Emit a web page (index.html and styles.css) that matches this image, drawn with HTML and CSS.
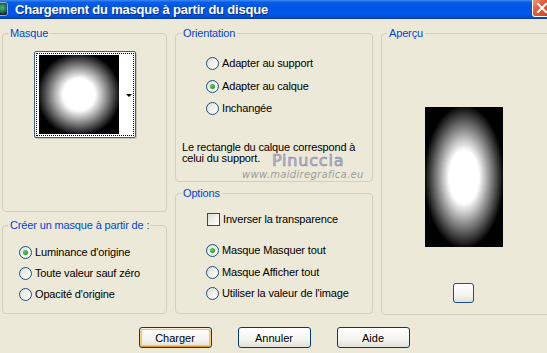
FILE: index.html
```html
<!DOCTYPE html>
<html lang="fr">
<head>
    <meta charset="UTF-8">
    <title>Chargement du masque à partir du disque</title>
    <link rel="stylesheet" href="styles.css">
</head>
<body>

    <div class="titlebar">
        <span class="app-icon"></span>
        <span class="title">Chargement du masque à partir du disque</span>
        <span class="close-btn">
            <svg width="12" height="12" viewBox="0 0 12 12">
                <path d="M2 2 L10 10 M10 2 L2 10" stroke="#fff" stroke-width="2" stroke-linecap="square"/>
            </svg>
        </span>
    </div>

    <div class="content">
        <div class="column">
            <div class="group masque">
                <span class="legend">Masque</span>
                <div class="thumb-box">
                    <div class="thumb-inner">
                        <div class="thumb-image"></div>
                        <div class="thumb-strip"><span class="arrow"></span></div>
                    </div>
                </div>
            </div>

            <div class="group creer">
                <span class="legend">Créer un masque à partir de :</span>
                <div class="options-list">
                    <div class="option"><span class="radio checked"></span>Luminance d'origine</div>
                    <div class="option"><span class="radio"></span>Toute valeur sauf zéro</div>
                    <div class="option"><span class="radio"></span>Opacité d'origine</div>
                </div>
            </div>
        </div>

        <div class="column">
            <div class="group orientation">
                <span class="legend">Orientation</span>
                <div class="options-list">
                    <div class="option"><span class="radio"></span>Adapter au support</div>
                    <div class="option"><span class="radio checked"></span>Adapter au calque</div>
                    <div class="option"><span class="radio"></span>Inchangée</div>
                </div>
                <p class="note">Le rectangle du calque correspond à<br>celui du support.</p>
                <span class="watermark-name">Pinuccia</span>
                <span class="watermark-url">www.maidiregrafica.eu</span>
            </div>

            <div class="group options">
                <span class="legend">Options</span>
                <div class="option check-row"><span class="checkbox"></span>Inverser la transparence</div>
                <div class="options-list">
                    <div class="option"><span class="radio checked"></span>Masque Masquer tout</div>
                    <div class="option"><span class="radio"></span>Masque Afficher tout</div>
                    <div class="option"><span class="radio"></span>Utiliser la valeur de l'image</div>
                </div>
            </div>
        </div>

        <div class="column">
            <div class="group apercu">
                <span class="legend">Aperçu</span>
                <div class="preview"></div>
                <div class="small-btn"></div>
            </div>
        </div>
    </div>

    <div class="buttons">
        <button class="btn default">Charger</button>
        <button class="btn">Annuler</button>
        <button class="btn">Aide</button>
    </div>

</body>
</html>
```

FILE: styles.css
```css
html, body {
    margin: 0;
    padding: 0;
}

body {
    width: 547px;
    height: 353px;
    overflow: hidden;
    background-color: #ECE9D8; /* XP dialog beige */
    font-family: 'Liberation Sans', Arial, sans-serif;
    font-size: 11px;
    letter-spacing: -0.15px;
    color: #000;
}

/* Title bar */
.titlebar {
    position: relative;
    height: 19px;
    display: flex;
    align-items: center;
    background: linear-gradient(#3B8CF5 0, #0A5EE6 12%, #0054E3 40%, #0058EE 75%, #0847C8 100%);
    border-bottom: 1px solid #0A3FAE;
    box-sizing: border-box;
}

.app-icon {
    position: absolute;
    left: -6px;
    top: 2px;
    width: 14px;
    height: 14px;
    border-radius: 3px;
    background: radial-gradient(circle at 60% 40%, #3ec46b 0, #2a6b5a 40%, #1a1a2a 70%);
    border: 1px solid #9ab;
    box-sizing: border-box;
}

.title {
    margin-left: 15px;
    color: #FFFFFF;
    font-weight: bold;
    font-size: 13px;
    letter-spacing: -0.2px;
    text-shadow: 1px 1px 0 #0A2B8A;
}

.close-btn {
    position: absolute;
    left: 532px;
    top: 0;
    width: 21px;
    height: 17px;
    border: 1px solid #fff;
    border-top: none;
    border-radius: 0 0 0 3px;
    background: linear-gradient(135deg, #F19C7E 0, #E35D3A 35%, #C8401F 100%);
    box-sizing: border-box;
    display: flex;
    align-items: center;
    padding-left: 3px;
}

/* Main layout */
.content {
    display: grid;
    grid-template-columns: 165px 198px 170px;
    column-gap: 8px;
    padding: 14px 0 0 2px;
}

.column {
    display: flex;
    flex-direction: column;
}

.group {
    position: relative;
    border: 1px solid #D0D0BF;
    border-radius: 4px;
    box-sizing: border-box;
}

.legend {
    position: absolute;
    left: 5px;
    top: -7px;
    padding: 0 2px;
    line-height: 13px;
    color: #0046D5;
    background-color: #ECE9D8;
    white-space: nowrap;
}

.masque {
    height: 179px;
}

.creer {
    height: 89px;
    margin-top: 13px;
}

.orientation {
    height: 149px;
}

.options {
    height: 121px;
    margin-top: 11px;
}

.apercu {
    height: 282px;
}

/* Mask thumbnail */
.thumb-box {
    width: 102px;
    height: 87px;
    margin: 17px 0 0 31px;
    border: 1px solid #3F5F7F;
    border-radius: 2px;
    background-color: #FFFFFF;
    box-sizing: border-box;
    padding: 1px;
    box-shadow: 1px 1px 0 #C9C6B5;
}

.thumb-inner {
    height: 100%;
    border: 1px dotted #000;
    box-sizing: border-box;
    display: flex;
    padding: 1px 0 0 2px;
}

.thumb-image {
    width: 80px;
    height: 79px;
    background: radial-gradient(circle at 50% 50%, #FFFFFF 0, #FFFFFF 16px, #000000 42px);
}

.thumb-strip {
    flex: 1;
    display: flex;
    align-items: center;
    justify-content: flex-end;
    padding-right: 1px;
}

.arrow {
    width: 0;
    height: 0;
    border-left: 3px solid transparent;
    border-right: 3px solid transparent;
    border-top: 3px solid #000;
    margin-top: 1px;
}

/* Radios and checkboxes */
.options-list {
    display: flex;
    flex-direction: column;
}

.option {
    display: flex;
    align-items: center;
    height: 13px;
    line-height: 13px;
    white-space: nowrap;
}

.radio,
.checkbox {
    width: 13px;
    height: 13px;
    flex-shrink: 0;
    margin-right: 3px;
    border: 1px solid #1C5180;
    box-sizing: border-box;
    background: linear-gradient(135deg, #DCDCD7 0, #F2F2EE 55%, #FFFFFF 100%);
    position: relative;
}

.radio {
    border-radius: 50%;
}

.radio.checked::after {
    content: '';
    position: absolute;
    left: 3px;
    top: 3px;
    width: 5px;
    height: 5px;
    border-radius: 50%;
    background: radial-gradient(circle at 40% 35%, #63D163 0, #21A121 70%);
}

.creer .options-list {
    margin: 20px 0 0 16px;
    gap: 8px;
}

.orientation .options-list {
    margin: 23px 0 0 30px;
    gap: 9.5px;
}

.note {
    margin: 27px 0 0 6px;
    line-height: 11px;
}

.watermark-name {
    position: absolute;
    left: 96px;
    top: 121px;
    line-height: 12px;
    font-family: 'DejaVu Sans', sans-serif;
    font-size: 16px;
    letter-spacing: 0.8px;
    color: #B9B9D0;
    -webkit-text-stroke: 0.6px #8C8CA8;
}

.watermark-url {
    position: absolute;
    left: 66px;
    top: 135px;
    line-height: 11px;
    font-family: 'DejaVu Sans', sans-serif;
    font-size: 10px;
    font-style: italic;
    color: #9C9C9C;
    letter-spacing: 0.3px;
}

.check-row {
    margin: 19px 0 0 31px;
}

.options .options-list {
    margin: 18px 0 0 30px;
    gap: 8.5px;
}

/* Preview */
.preview {
    width: 78px;
    height: 140px;
    margin: 73px 0 0 43px;
    background: radial-gradient(ellipse 40px 72px at 50% 50%, #FFFFFF 0, #FFFFFF 37%, #000000 100%);
}

.small-btn {
    width: 21px;
    height: 20px;
    margin: 36px 0 0 71px;
    border: 1px solid #1C5180;
    border-radius: 3px;
    box-sizing: border-box;
    background: linear-gradient(#FFFFFF, #F1F1EC 70%, #E2E0D6);
}

/* Dialog buttons */
.buttons {
    display: flex;
    justify-content: center;
    gap: 26px;
    margin-top: 12px;
    padding-left: 1px;
}

.btn {
    width: 73px;
    height: 21px;
    padding: 0;
    font-family: 'Liberation Sans', Arial, sans-serif;
    font-size: 11px;
    color: #000;
    border: 1px solid #003C74;
    border-radius: 3px;
    background: linear-gradient(#FFFFFF 0, #F4F4F0 60%, #E3E1D7 100%);
}

.btn.default {
    box-shadow: inset 0 1px 0 #FFF0CF, inset 1px 0 0 #FBD27A, inset -1px 0 0 #FBD27A, inset 0 -1px 0 #E59700, inset 0 0 0 2px #F8C463;
}
```
